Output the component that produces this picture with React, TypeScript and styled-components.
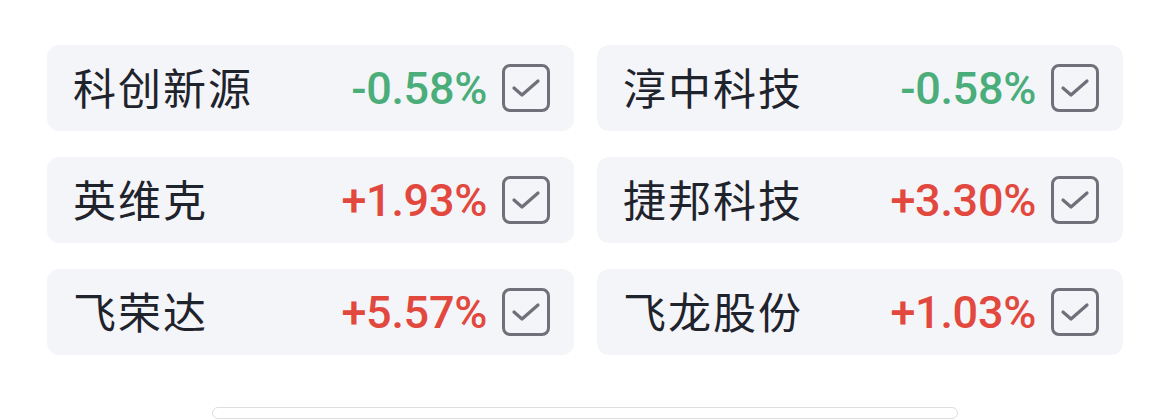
import React from "react";
import styled, { createGlobalStyle } from "styled-components";

const Global = createGlobalStyle`
  html, body { margin: 0; padding: 0; background: #ffffff; }
  body { font-family: "Noto Sans CJK SC", "Noto Sans", sans-serif; }
`;

const Page = styled.div`
  width: 1170px;
  height: 419px;
  overflow: hidden;
  display: flex;
  flex-direction: column;
  align-items: center;
  padding-top: 45px;
  box-sizing: border-box;
`;

const Grid = styled.div`
  display: grid;
  grid-template-columns: 527px 526px;
  column-gap: 23px;
  row-gap: 26px;
`;

const Card = styled.div`
  height: 86px;
  background: #f4f5f9;
  border-radius: 12px;
  display: flex;
  align-items: center;
  padding: 0 24px 0 26px;
  box-sizing: border-box;
`;

const Name = styled.span`
  flex: 1;
  font-family: "Noto Sans CJK SC", sans-serif;
  font-size: 43px;
  font-weight: 400;
  color: #1f232c;
  letter-spacing: 2px;
  line-height: 1;
  margin-top: -4px;
`;

const Change = styled.span<{ $up: boolean }>`
  font-family: Roboto, "Noto Sans", sans-serif;
  font-size: 45px;
  font-weight: 500;
  color: ${(p) => (p.$up ? "#e2483d" : "#4aad7a")};
  margin-right: 15px;
  line-height: 1;
  letter-spacing: -0.3px;
`;

const Box = styled.div`
  width: 48px;
  height: 48px;
  box-sizing: border-box;
  border: 3px solid #6f7079;
  border-radius: 8px;
  display: flex;
  align-items: center;
  justify-content: center;
`;

const Bottom = styled.div`
  margin-top: 52px;
  width: 746px;
  height: 40px;
  border: 1.5px solid #dedede;
  border-radius: 20px;
  background: #fff;
  box-sizing: border-box;
`;

const data = [
  { name: "科创新源", change: "-0.58%", up: false },
  { name: "淳中科技", change: "-0.58%", up: false },
  { name: "英维克", change: "+1.93%", up: true },
  { name: "捷邦科技", change: "+3.30%", up: true },
  { name: "飞荣达", change: "+5.57%", up: true },
  { name: "飞龙股份", change: "+1.03%", up: true },
];

const Check = () => (
  <svg width="30" height="22" viewBox="0 0 30 22" fill="none">
    <path d="M3 11 L11 18 L27 4" stroke="#6f7079" strokeWidth="3.2" strokeLinecap="round" strokeLinejoin="round" />
  </svg>
);

export default function App() {
  return (
    <>
      <Global />
      <Page>
        <Grid>
          {data.map((d) => (
            <Card key={d.name}>
              <Name>{d.name}</Name>
              <Change $up={d.up}>{d.change}</Change>
              <Box>
                <Check />
              </Box>
            </Card>
          ))}
        </Grid>
        <Bottom />
      </Page>
    </>
  );
}
